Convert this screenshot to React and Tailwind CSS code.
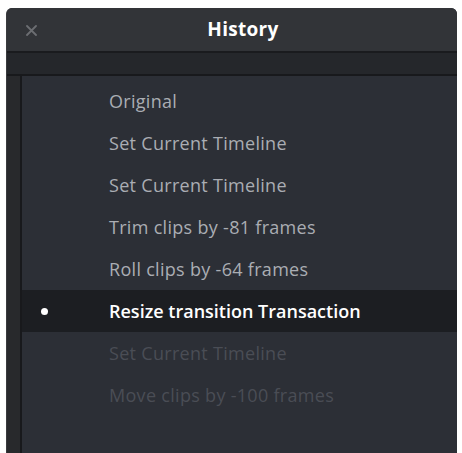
import React from "react";

const ITEMS = [
  { label: "Original", state: "done" },
  { label: "Set Current Timeline", state: "done" },
  { label: "Set Current Timeline", state: "done" },
  { label: "Trim clips by -81 frames", state: "done" },
  { label: "Roll clips by -64 frames", state: "done" },
  { label: "Resize transition Transaction", state: "current" },
  { label: "Set Current Timeline", state: "undone" },
  { label: "Move clips by -100 frames", state: "undone" },
];

const HistoryRow = ({ item }) => {
  const current = item.state === "current";
  const undone = item.state === "undone";
  return (
    <div className={`flex items-center h-[42px] ${current ? "bg-[#1c1e22]" : ""}`}>
      <div className="w-[87px] shrink-0 flex items-center pl-[19px]">
        {current && <span className="w-[7px] h-[7px] rounded-full bg-white" />}
      </div>
      <span
        className={`text-[18px] ${
          current
            ? "text-white font-semibold tracking-[0px]"
            : undone
            ? "text-[#4a4d55] tracking-[0.3px]"
            : "text-[#aaadb3] tracking-[0.3px]"
        }`}
      >
        {item.label}
      </span>
    </div>
  );
};

export default function App() {
  return (
    <div
      className="w-[462px] h-[453px] bg-white pt-[8px] pl-[6px] pr-[5px] overflow-hidden"
      style={{ fontFamily: '"Open Sans", "Liberation Sans", sans-serif' }}
    >
      <div className="h-full flex flex-col rounded-t-[6px] overflow-hidden bg-[#26282c] border-l border-[#3a3b3e]">
        <div className="h-[45px] shrink-0 bg-[#323438] flex items-center relative border-b-2 border-[#1a1b1e]">
          <svg className="absolute left-[19px] top-[17px]" width="11" height="11" viewBox="0 0 11 11">
            <path d="M1 1L10 10M10 1L1 10" stroke="#6c6e72" strokeWidth="1.8" strokeLinecap="round" />
          </svg>
          <h1 className="flex-1 text-center text-white font-bold text-[19px] pl-[22px] tracking-[0.3px]">History</h1>
        </div>
        <div className="h-[23px] shrink-0 bg-[#25272b] border-b-2 border-[#18191c]" />
        <div className="flex-1 flex">
          <div className="w-[15px] shrink-0 bg-[#28292c] border-r-2 border-[#18191c]" />
          <div className="flex-1 bg-[#2c2f36] pt-[4px]">
            {ITEMS.map((item, i) => (
              <HistoryRow key={i} item={item} />
            ))}
          </div>
        </div>
      </div>
    </div>
  );
}
